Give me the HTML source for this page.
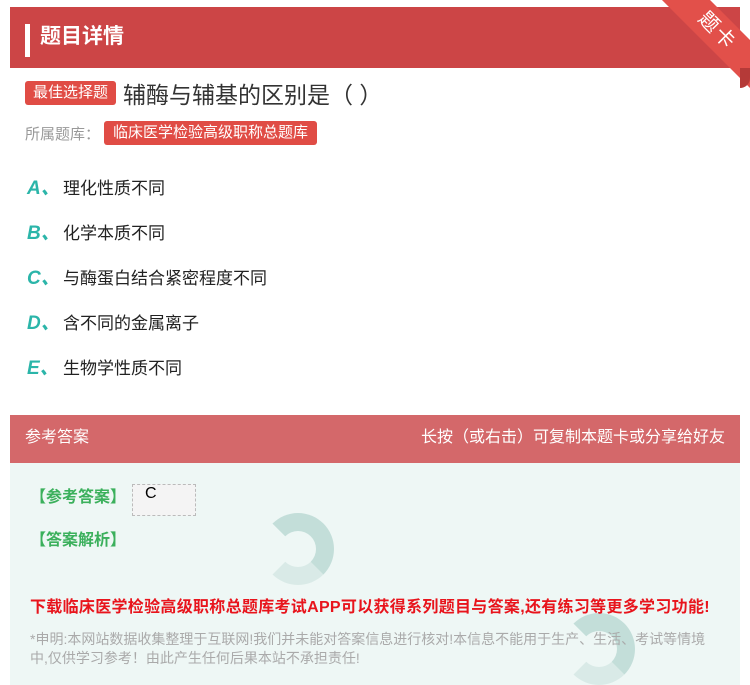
<!DOCTYPE html>
<html><head><meta charset="utf-8"><style>
*{margin:0;padding:0;box-sizing:border-box}
body{width:750px;height:685px;background:#fff;font-family:"Liberation Sans","Noto Sans CJK SC",sans-serif;position:relative;overflow:hidden}
.hd{position:absolute;left:10px;top:7px;width:730px;height:61px;background:#cc4546;}
.hd .bar{position:absolute;left:15px;top:17px;width:5px;height:33px;background:#fff}
.hd .t{position:absolute;left:30px;top:13px;color:#fff;font-size:21px;font-weight:bold}
.rib{position:absolute;width:150px;height:34px;background:#e2504a;transform:rotate(45deg);color:#fff;font-size:20px;text-align:center;line-height:34px;right:-42px;top:14px;letter-spacing:2px}
.fold{position:absolute;right:0;top:68px;width:10px;height:20px;background:#b53a38;border-radius:0 0 10px 0}
.tag{display:inline-block;background:#e04c45;color:#fff;border-radius:3px;font-size:15px;padding:0 8px;height:24px;line-height:24px}
.q{position:absolute;left:25px;top:76px;font-size:23px;color:#333;display:flex;align-items:center;gap:7px}
.lib{position:absolute;left:25px;top:121px;font-size:15px;color:#999;display:flex;align-items:center;gap:4px}
.opt{position:absolute;left:27px;font-size:17px;color:#222}
.opt b{color:#2bb5a9;font-style:italic;font-size:19px;display:inline-block;width:36px}
.ah{position:absolute;left:10px;top:415px;width:730px;height:48px;background:#d4686a;color:#fff;font-size:16px;line-height:46px;padding:0 15px}
.ah span{float:right}
.ab{position:absolute;left:10px;top:463px;width:730px;height:222px;background:#eef7f5;overflow:hidden}
.g{color:#3bb05c;font-size:16px;font-weight:bold;position:absolute;left:20px}
.red{position:absolute;left:20px;top:130px;color:#e8141c;font-size:16px;font-weight:bold;letter-spacing:0.3px;white-space:nowrap}
.note{position:absolute;left:20px;top:167px;color:#aaa;font-size:14px;line-height:19px;width:690px}
.sw{position:absolute;border-radius:50%;border:18px solid #b9d9d3;border-left-color:transparent;border-bottom-color:#d5e8e4;opacity:.8}
</style></head><body>
<div class="hd"><div class="bar"></div><div class="t">题目详情</div></div>
<div class="rib">题卡</div><div class="fold"></div>
<div class="q"><span class="tag">最佳选择题</span><span>辅酶与辅基的区别是（ ）</span></div>
<div class="lib"><span>所属题库：</span><span class="tag" style="padding:0 9px">临床医学检验高级职称总题库</span></div>
<div class="opt" style="top:173px"><b>A、</b>理化性质不同</div>
<div class="opt" style="top:218px"><b>B、</b>化学本质不同</div>
<div class="opt" style="top:263px"><b>C、</b>与酶蛋白结合紧密程度不同</div>
<div class="opt" style="top:308px"><b>D、</b>含不同的金属离子</div>
<div class="opt" style="top:353px"><b>E、</b>生物学性质不同</div>
<div class="ah">参考答案<span>长按（或右击）可复制本题卡或分享给好友</span></div>
<div class="ab">
<div class="sw" style="left:252px;top:50px;width:72px;height:72px"></div>
<div class="sw" style="left:553px;top:150px;width:72px;height:72px"></div>
<div class="g" style="top:20px">【参考答案】</div>
<div style="position:absolute;left:122px;top:21px;width:64px;height:32px;background:#f4f4f4;border:1px dashed #bbb;font-size:16px;padding-left:12px">C</div>
<div class="g" style="top:63px">【答案解析】</div>
<div class="red">下载临床医学检验高级职称总题库考试APP可以获得系列题目与答案,还有练习等更多学习功能!</div>
<div class="note">*申明:本网站数据收集整理于互联网!我们并未能对答案信息进行核对!本信息不能用于生产、生活、考试等情境中,仅供学习参考！由此产生任何后果本站不承担责任!</div>
</div>
</body></html>
